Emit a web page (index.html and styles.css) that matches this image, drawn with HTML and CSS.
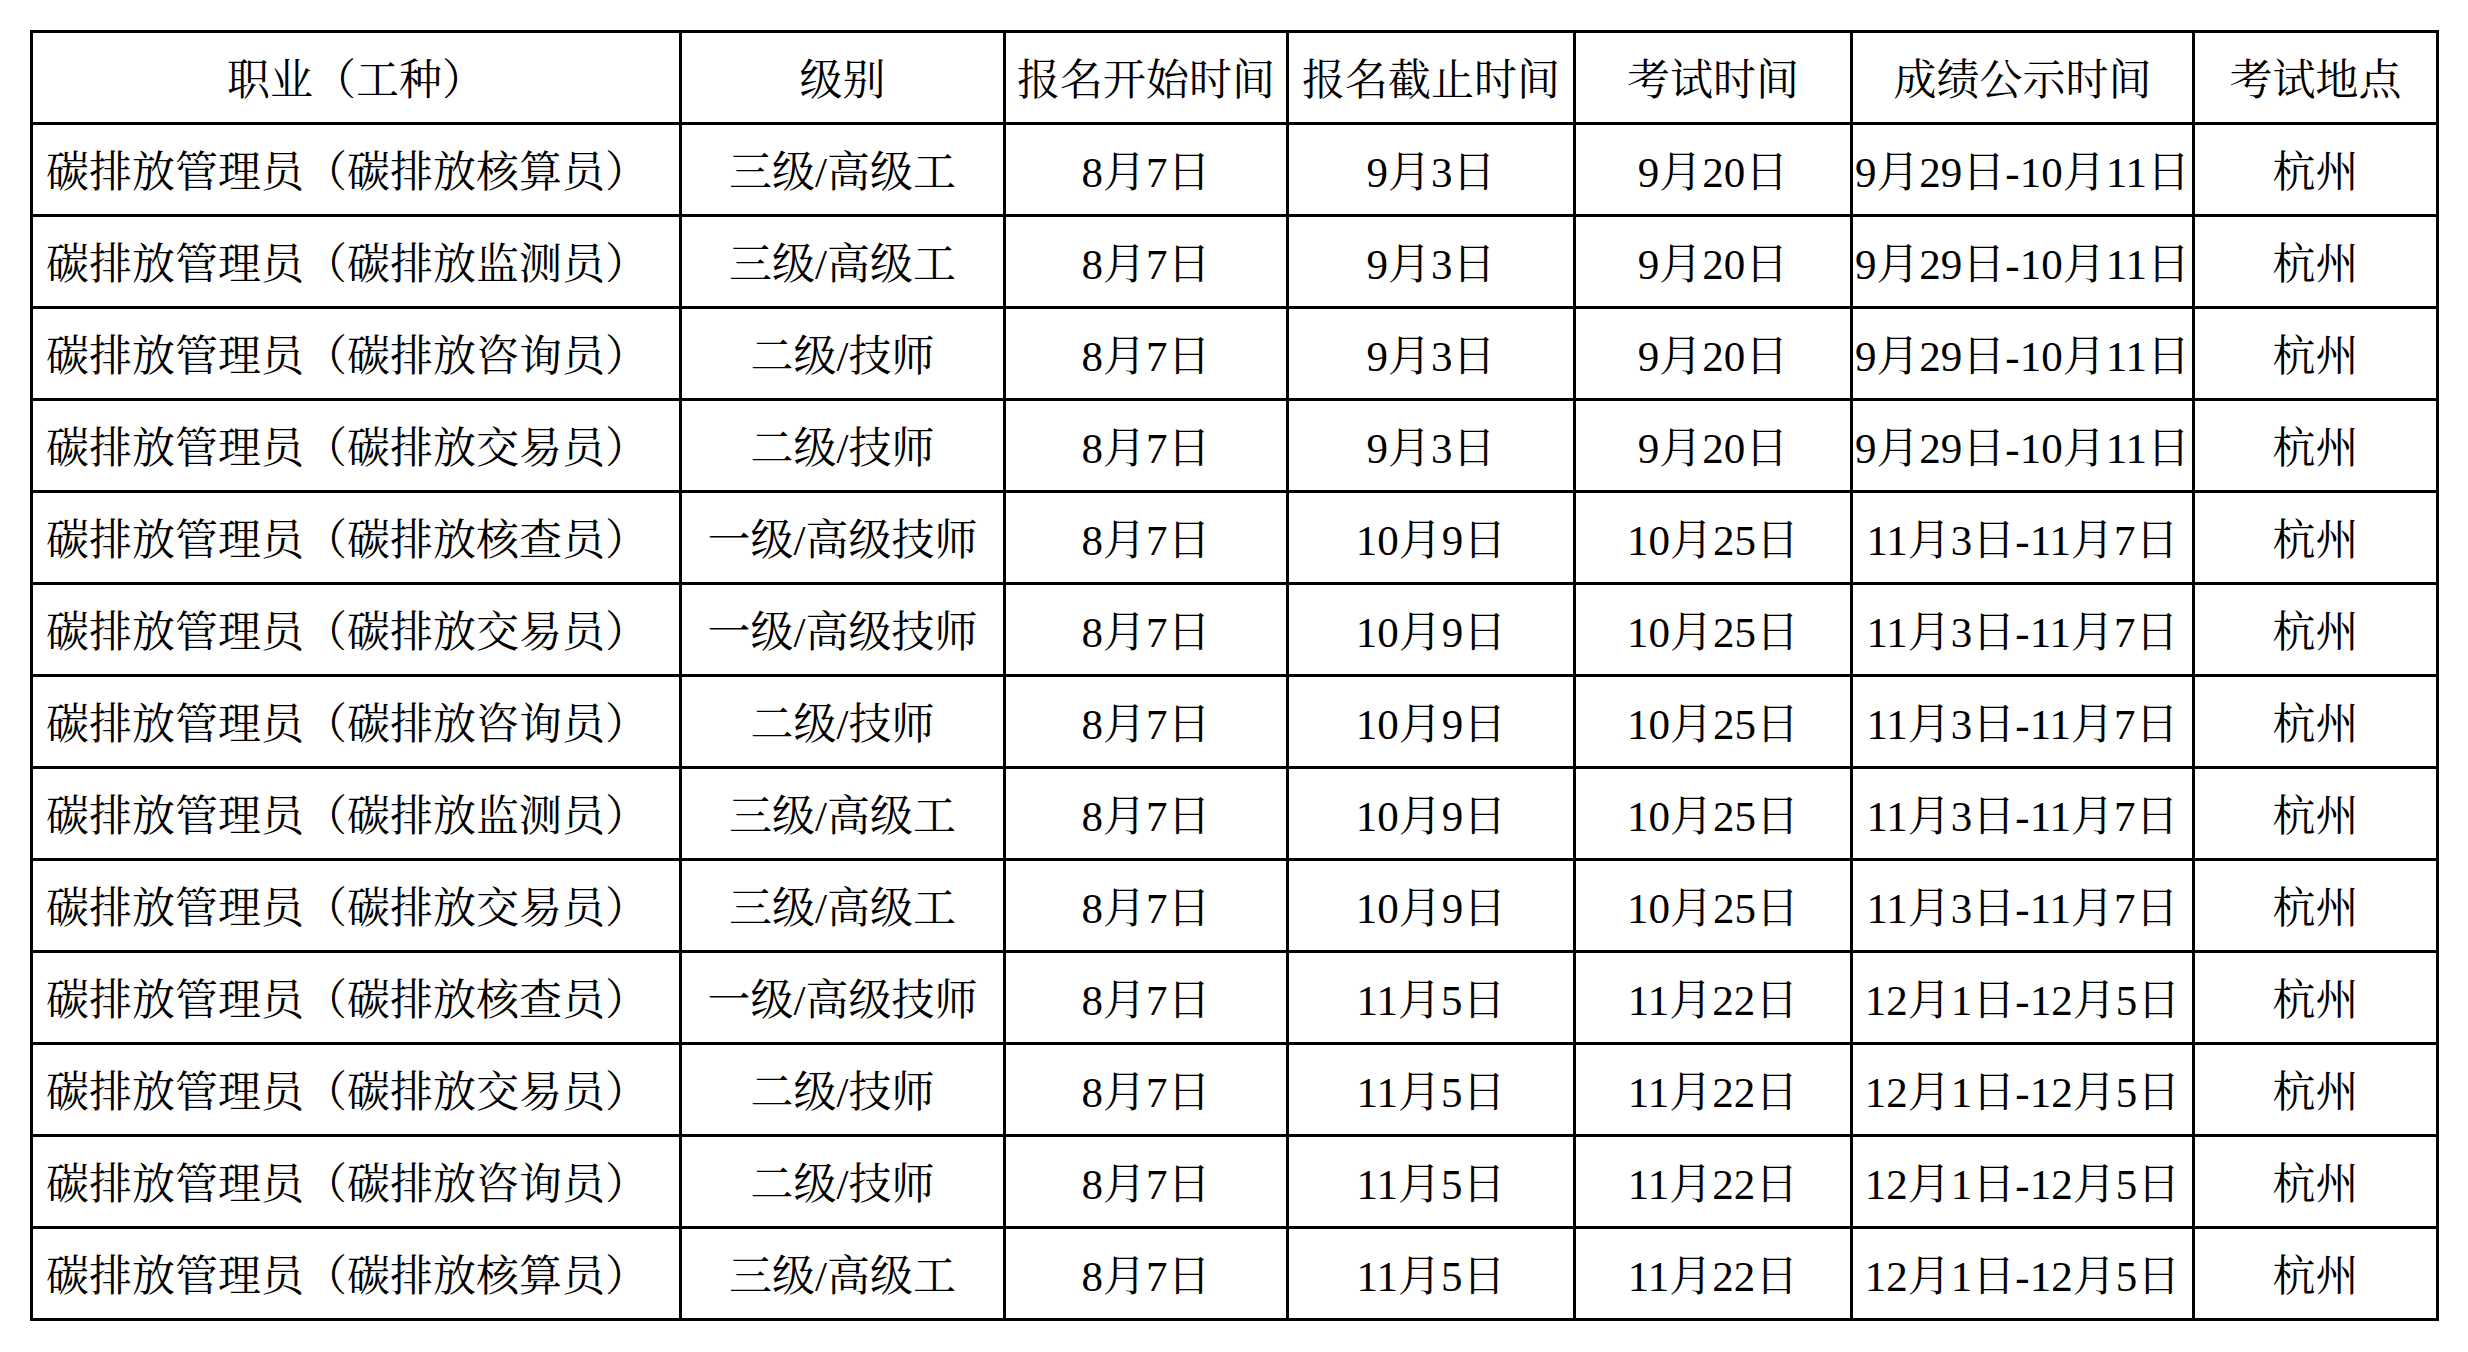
FILE: index.html
```html
<!DOCTYPE html>
<html lang="zh-CN">
<head>
<meta charset="utf-8">
<title>碳排放管理员考试安排</title>
<link rel="stylesheet" href="styles.css">
</head>
<body>
<table class="schedule">
  <colgroup>
    <col class="c-job">
    <col class="c-level">
    <col class="c-start">
    <col class="c-end">
    <col class="c-exam">
    <col class="c-result">
    <col class="c-place">
  </colgroup>
  <thead>
    <tr>
      <th>职业（工种）</th>
      <th>级别</th>
      <th>报名开始时间</th>
      <th>报名截止时间</th>
      <th>考试时间</th>
      <th>成绩公示时间</th>
      <th>考试地点</th>
    </tr>
  </thead>
  <tbody>
    <tr><td class="job">碳排放管理员（碳排放核算员）</td><td>三级/高级工</td><td>8月7日</td><td>9月3日</td><td>9月20日</td><td>9月29日-10月11日</td><td>杭州</td></tr>
    <tr><td class="job">碳排放管理员（碳排放监测员）</td><td>三级/高级工</td><td>8月7日</td><td>9月3日</td><td>9月20日</td><td>9月29日-10月11日</td><td>杭州</td></tr>
    <tr><td class="job">碳排放管理员（碳排放咨询员）</td><td>二级/技师</td><td>8月7日</td><td>9月3日</td><td>9月20日</td><td>9月29日-10月11日</td><td>杭州</td></tr>
    <tr><td class="job">碳排放管理员（碳排放交易员）</td><td>二级/技师</td><td>8月7日</td><td>9月3日</td><td>9月20日</td><td>9月29日-10月11日</td><td>杭州</td></tr>
    <tr><td class="job">碳排放管理员（碳排放核查员）</td><td>一级/高级技师</td><td>8月7日</td><td>10月9日</td><td>10月25日</td><td>11月3日-11月7日</td><td>杭州</td></tr>
    <tr><td class="job">碳排放管理员（碳排放交易员）</td><td>一级/高级技师</td><td>8月7日</td><td>10月9日</td><td>10月25日</td><td>11月3日-11月7日</td><td>杭州</td></tr>
    <tr><td class="job">碳排放管理员（碳排放咨询员）</td><td>二级/技师</td><td>8月7日</td><td>10月9日</td><td>10月25日</td><td>11月3日-11月7日</td><td>杭州</td></tr>
    <tr><td class="job">碳排放管理员（碳排放监测员）</td><td>三级/高级工</td><td>8月7日</td><td>10月9日</td><td>10月25日</td><td>11月3日-11月7日</td><td>杭州</td></tr>
    <tr><td class="job">碳排放管理员（碳排放交易员）</td><td>三级/高级工</td><td>8月7日</td><td>10月9日</td><td>10月25日</td><td>11月3日-11月7日</td><td>杭州</td></tr>
    <tr><td class="job">碳排放管理员（碳排放核查员）</td><td>一级/高级技师</td><td>8月7日</td><td>11月5日</td><td>11月22日</td><td>12月1日-12月5日</td><td>杭州</td></tr>
    <tr><td class="job">碳排放管理员（碳排放交易员）</td><td>二级/技师</td><td>8月7日</td><td>11月5日</td><td>11月22日</td><td>12月1日-12月5日</td><td>杭州</td></tr>
    <tr><td class="job">碳排放管理员（碳排放咨询员）</td><td>二级/技师</td><td>8月7日</td><td>11月5日</td><td>11月22日</td><td>12月1日-12月5日</td><td>杭州</td></tr>
    <tr><td class="job">碳排放管理员（碳排放核算员）</td><td>三级/高级工</td><td>8月7日</td><td>11月5日</td><td>11月22日</td><td>12月1日-12月5日</td><td>杭州</td></tr>
  </tbody>
</table>
</body>
</html>
```

FILE: styles.css
```css
html, body {
  margin: 0;
  padding: 0;
  background: #ffffff;
}

body {
  padding: 30px 0 0 30px;
  font-family: "Liberation Serif", "Noto Serif CJK SC", "Noto Sans CJK SC", serif;
  color: #000000;
}

.schedule {
  border-collapse: collapse;
  table-layout: fixed;
  width: 2406px;
  font-size: 43px;
  line-height: 1;
}

.c-job { width: 649px; }
.c-level { width: 324px; }
.c-start { width: 283px; }
.c-end { width: 287px; }
.c-exam { width: 277px; }
.c-result { width: 342px; }
.c-place { width: 244px; }

.schedule th,
.schedule td {
  border: 3px solid #000000;
  height: 83px;
  padding: 6px 0 0 0;
  text-align: center;
  vertical-align: middle;
  font-weight: normal;
  white-space: nowrap;
  overflow: hidden;
}

.schedule td.job {
  text-align: left;
  padding-left: 13px;
}
```
